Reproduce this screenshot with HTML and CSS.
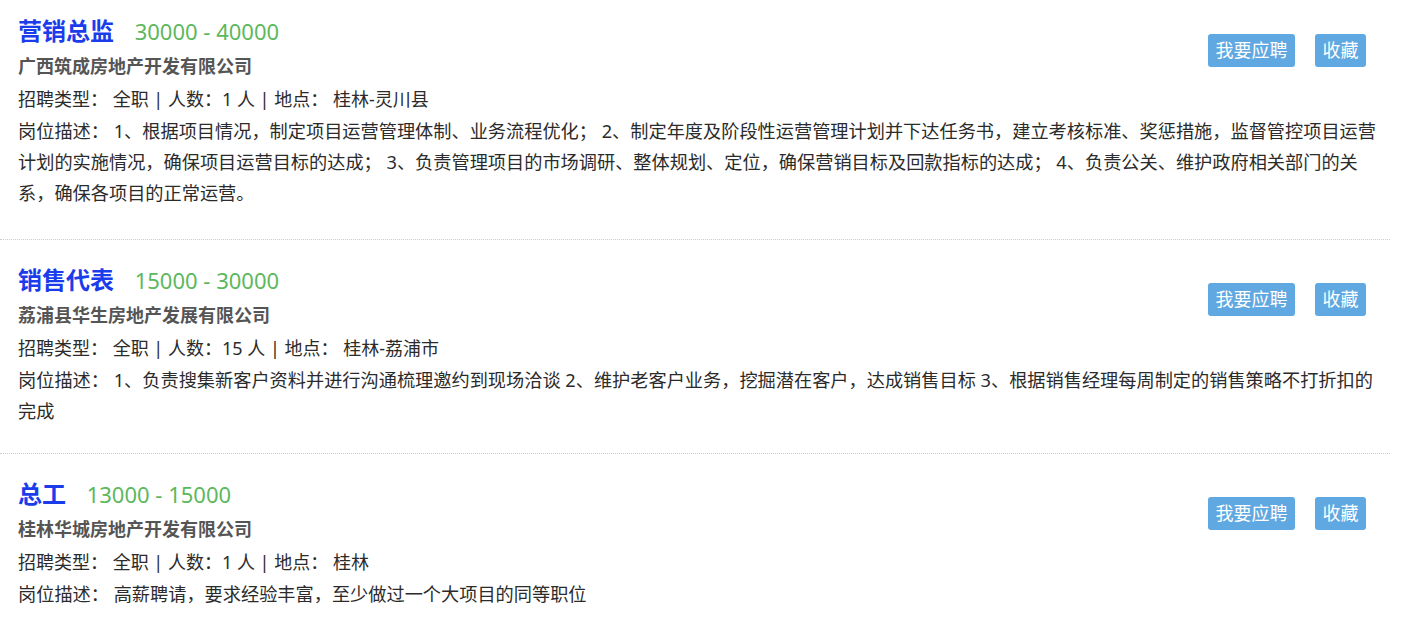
FILE: index.html
```html
<!DOCTYPE html>
<html lang="zh-CN">
<head>
    <meta charset="UTF-8">
    <meta name="viewport" content="width=device-width, initial-scale=1.0">
    <title>招聘职位</title>
    <link rel="stylesheet" href="styles.css">
</head>
<body>
    <div class="job-list">
        <div class="job-item">
            <div class="job-actions">
                <a class="btn" href="#">我要应聘</a>
                <a class="btn" href="#">收藏</a>
            </div>
            <div class="job-head">
                <span class="job-title">营销总监</span>
                <span class="job-salary">30000 - 40000</span>
            </div>
            <div class="job-company">广西筑成房地产开发有限公司</div>
            <div class="job-info">招聘类型： 全职 | 人数：1 人 | 地点： 桂林-灵川县</div>
            <div class="job-desc">岗位描述： 1、根据项目情况，制定项目运营管理体制、业务流程优化； 2、制定年度及阶段性运营管理计划并下达任务书，建立考核标准、奖惩措施，监督管控项目运营计划的实施情况，确保项目运营目标的达成； 3、负责管理项目的市场调研、整体规划、定位，确保营销目标及回款指标的达成； 4、负责公关、维护政府相关部门的关系，确保各项目的正常运营。</div>
        </div>
        <div class="job-item">
            <div class="job-actions">
                <a class="btn" href="#">我要应聘</a>
                <a class="btn" href="#">收藏</a>
            </div>
            <div class="job-head">
                <span class="job-title">销售代表</span>
                <span class="job-salary">15000 - 30000</span>
            </div>
            <div class="job-company">荔浦县华生房地产发展有限公司</div>
            <div class="job-info">招聘类型： 全职 | 人数：15 人 | 地点： 桂林-荔浦市</div>
            <div class="job-desc">岗位描述： 1、负责搜集新客户资料并进行沟通梳理邀约到现场洽谈 2、维护老客户业务，挖掘潜在客户，达成销售目标 3、根据销售经理每周制定的销售策略不打折扣的完成</div>
        </div>
        <div class="job-item">
            <div class="job-actions">
                <a class="btn" href="#">我要应聘</a>
                <a class="btn" href="#">收藏</a>
            </div>
            <div class="job-head">
                <span class="job-title">总工</span>
                <span class="job-salary">13000 - 15000</span>
            </div>
            <div class="job-company">桂林华城房地产开发有限公司</div>
            <div class="job-info">招聘类型： 全职 | 人数：1 人 | 地点： 桂林</div>
            <div class="job-desc">岗位描述： 高薪聘请，要求经验丰富，至少做过一个大项目的同等职位</div>
        </div>
    </div>
</body>
</html>
```

FILE: styles.css
```css
body {
    margin: 0;
    padding: 0;
    background-color: #fff;
    font-family: "Noto Sans", "Noto Sans CJK SC", sans-serif;
    font-size: 18px;
    color: #2b2b2b;
}
.job-list {
    width: 1390px;
}
.job-item {
    padding: 20px 10px 26px 18px;
    border-bottom: 1px dotted #ccc;
}
.job-item:first-child {
    padding-top: 11px;
    padding-bottom: 30px;
}
.job-actions {
    float: right;
    margin: 23px 14px 0 0;
    display: flex;
    gap: 20px;
}
.btn {
    display: block;
    padding: 0 7.5px;
    height: 33px;
    line-height: 33px;
    font-size: 18px;
    color: #fff;
    background-color: #5fa8e1;
    border-radius: 3px;
    text-decoration: none;
}
.job-head {
    height: 40px;
    line-height: 40px;
}
.job-title {
    font-size: 24px;
    font-weight: bold;
    color: #1a3ceb;
    margin-right: 16px;
}
.job-salary {
    font-size: 22px;
    color: #5cb85c;
}
.job-company {
    line-height: 31px;
    font-weight: bold;
    color: #555;
}
.job-info {
    line-height: 34px;
}
.job-desc {
    font-size: 18.2px;
    line-height: 31px;
}
```
